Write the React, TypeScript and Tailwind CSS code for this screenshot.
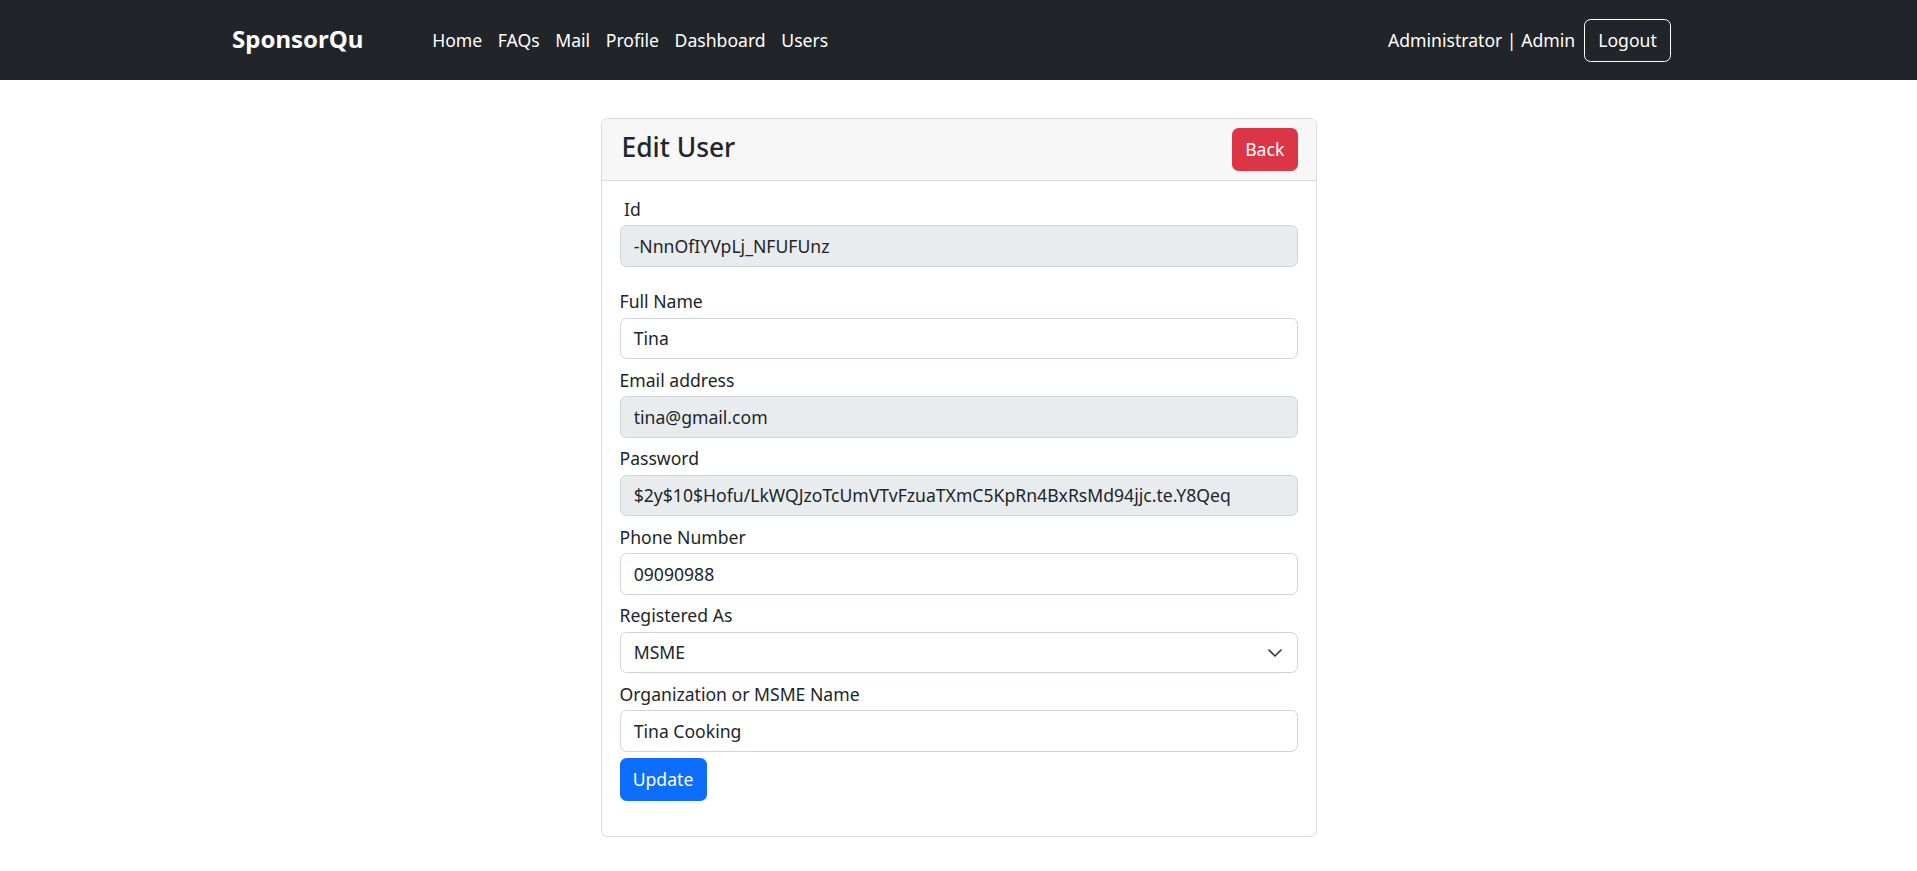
import React from "react";

const navLinks = ["Home", "FAQs", "Mail", "Profile", "Dashboard", "Users"];

type FieldProps = {
  label: string;
  value: string;
  disabled?: boolean;
  className?: string;
};

const Field: React.FC<FieldProps> = ({ label, value, disabled, className }) => (
  <div className={className ?? "mb-[10.5px]"}>
    <label className="block leading-[20px] pb-[6.4px]">{label}</label>
    <div
      className={`h-[41.6px] flex items-center px-[13.2px] border border-[#ced4da] rounded-[6.6px] ${
        disabled ? "bg-[#e9ecef]" : "bg-white"
      }`}
    >
      {value}
    </div>
  </div>
);

export default function App() {
  return (
    <div className="min-h-screen bg-white text-[#212529] text-[17.6px] font-['Noto_Sans','Open_Sans',sans-serif]">
      <nav className="h-[80px] bg-[#212529] flex items-center pl-[232px] pr-[246px] text-white">
        <span className="text-[24px] font-bold mr-[61px] pb-[2px]">SponsorQu</span>
        <ul className="flex">
          {navLinks.map((link) => (
            <li key={link} className="px-[7.8px]">
              {link}
            </li>
          ))}
        </ul>
        <div className="ml-auto flex items-center">
          <span>Administrator | Admin</span>
          <button className="ml-[9px] h-[43px] px-[13.2px] border border-white rounded-[6.6px]">
            Logout
          </button>
        </div>
      </nav>

      <main className="pt-[38px] pb-10">
        <div className="mx-auto w-[716px] border border-[#dadada] rounded-[6.6px] overflow-hidden">
          <div className="h-[62px] bg-[#f7f7f7] border-b border-[#dadada] flex items-center justify-between pl-[20px] pr-[18px]">
            <h4 className="text-[26.4px] font-medium leading-[32px] pb-[6px]">Edit User</h4>
            <button className="h-[43px] px-[13.2px] bg-[#dc3545] text-white rounded-[6.6px]">
              Back
            </button>
          </div>
          <div className="px-[18px] pt-[18px] pb-[35px]">
            <Field label={"\u00a0Id"} value="-NnnOfIYVpLj_NFUFUnz" disabled className="mb-[24.5px]" />
            <Field label="Full Name" value="Tina" />
            <Field label="Email address" value="tina@gmail.com" disabled />
            <Field
              label="Password"
              value="$2y$10$Hofu/LkWQJzoTcUmVTvFzuaTXmC5KpRn4BxRsMd94jjc.te.Y8Qeq"
              disabled
            />
            <Field label="Phone Number" value="09090988" />
            <div className="mb-[10.5px]">
              <label className="block leading-[20px] pb-[6.4px]">Registered As</label>
              <div className="h-[41.6px] flex items-center justify-between px-[13.2px] border border-[#ced4da] rounded-[6.6px] bg-white">
                <span>MSME</span>
                <svg width="16" height="16" viewBox="0 0 16 16" fill="none">
                  <path
                    d="m2 5 6 6 6-6"
                    stroke="#343a40"
                    strokeWidth="1.7"
                    strokeLinecap="round"
                    strokeLinejoin="round"
                  />
                </svg>
              </div>
            </div>
            <Field label="Organization or MSME Name" value="Tina Cooking" className="mb-[6px]" />
            <button className="h-[43px] px-[13.2px] bg-[#0d6efd] text-white rounded-[6.6px]">
              Update
            </button>
          </div>
        </div>
      </main>
    </div>
  );
}
